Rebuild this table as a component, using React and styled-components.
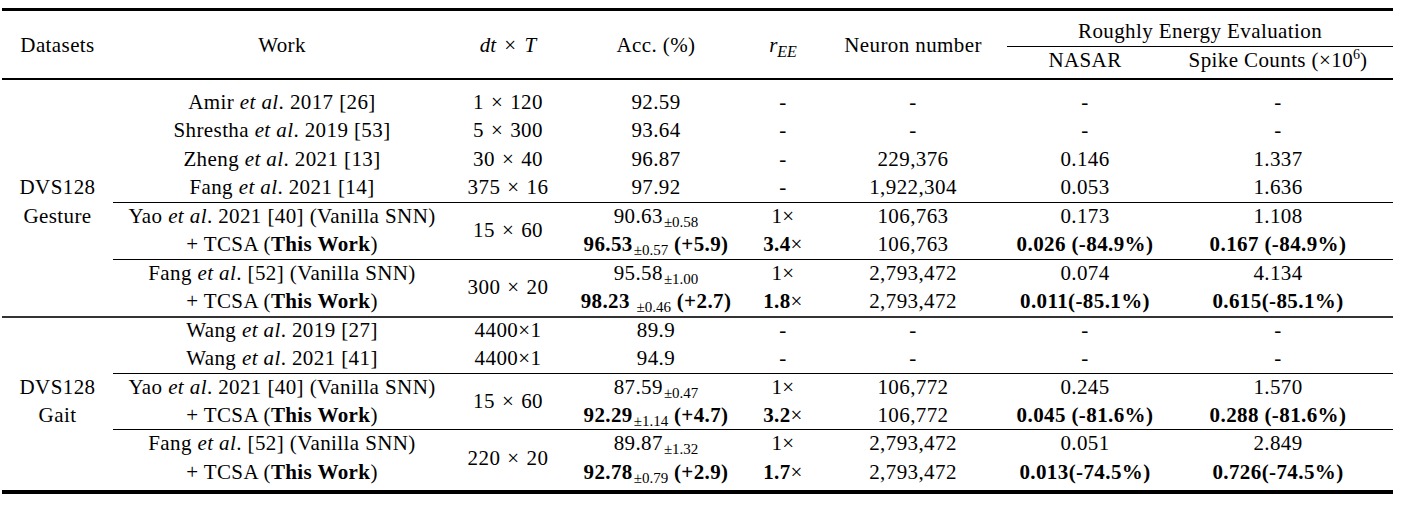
import React from 'react';
import styled, { createGlobalStyle } from 'styled-components';

const GlobalStyle = createGlobalStyle`
  html, body {
    margin: 0;
    padding: 0;
    background: #fff;
  }
  body {
    font-family: "Liberation Serif", "Times New Roman", serif;
    color: #000;
  }
`;

const Frame = styled.div`
  width: 1391px;
  margin: 8px 0 0 2px;
  border-top: 3px solid #000;
  border-bottom: 4px solid #000;
`;

const Table = styled.table`
  width: 100%;
  table-layout: fixed;
  border-collapse: separate;
  border-spacing: 0;
  font-size: 21px;
  letter-spacing: 0.4px;
`;

const Head = styled.th`
  font-weight: normal;
  text-align: center;
  vertical-align: middle;
  white-space: nowrap;
  line-height: 26px;
  padding: ${(p) => p.$pad || '0'};
  border-bottom: ${(p) => p.$rule || 0}px solid #000;
`;

const Cell = styled.td`
  padding: 0;
  height: 28.45px;
  line-height: 28.45px;
  text-align: center;
  vertical-align: middle;
  white-space: nowrap;
  box-shadow: ${(p) => (p.$rule ? `inset 0 ${p.$rule}px 0 ${p.$color || '#000'}` : 'none')};
`;

const Spacer = styled.tr`
  height: ${(p) => p.$h}px;
  td {
    padding: 0;
  }
`;

const M = styled.i`
  letter-spacing: 0;
`;

const Op = styled.span`
  display: inline-block;
  margin: 0 ${(p) => p.$gap || 5}px;
`;

const Sub = styled.sub`
  font-size: 16px;
  line-height: 0;
  vertical-align: -5px;
  letter-spacing: 0.5px;
`;

const Sup = styled.sup`
  font-size: 14px;
  line-height: 0;
  vertical-align: 8px;
  letter-spacing: 0;
`;

const Pm = styled.span`
  font-size: 15px;
  font-weight: normal;
  line-height: 0;
  vertical-align: -4px;
  letter-spacing: 0;
  margin-left: 1px;
`;

const Times = ({ a, b, tight }) => (
  <span>
    {a}
    {tight ? '×' : <Op $gap={7}>×</Op>}
    {b}
  </span>
);

const widths = [111, 338, 114, 182, 72, 188, 156, 230];

const yao = (
  <>
    Yao <i>et al</i>. 2021 [40] (Vanilla SNN)
  </>
);
const fang = (
  <>
    Fang <i>et al</i>. [52] (Vanilla SNN)
  </>
);
const tcsa = (
  <>
    + TCSA (<b>This Work</b>)
  </>
);

const groups = [
  {
    name: ['DVS128', 'Gesture'],
    rows: [
      { work: <>Amir <i>et al</i>. 2017 [26]</>, dt: <Times a="1" b="120" />, acc: '92.59', ree: '-', n: '-', nasar: '-', spike: '-' },
      { work: <>Shrestha <i>et al</i>. 2019 [53]</>, dt: <Times a="5" b="300" />, acc: '93.64', ree: '-', n: '-', nasar: '-', spike: '-' },
      { work: <>Zheng <i>et al</i>. 2021 [13]</>, dt: <Times a="30" b="40" />, acc: '96.87', ree: '-', n: '229,376', nasar: '0.146', spike: '1.337' },
      { work: <>Fang <i>et al</i>. 2021 [14]</>, dt: <Times a="375" b="16" />, acc: '97.92', ree: '-', n: '1,922,304', nasar: '0.053', spike: '1.636' },
      {
        rule: true,
        work: yao,
        dt: <Times a="15" b="60" />,
        span: 2,
        acc: <>90.63<Pm>±0.58</Pm></>,
        ree: '1×',
        n: '106,763',
        nasar: '0.173',
        spike: '1.108',
      },
      {
        work: tcsa,
        acc: <><b>96.53</b><Pm>±0.57</Pm> <b>(+5.9)</b></>,
        ree: <><b>3.4</b>×</>,
        n: '106,763',
        nasar: <b>0.026 (-84.9%)</b>,
        spike: <b>0.167 (-84.9%)</b>,
      },
      {
        rule: true,
        work: fang,
        dt: <Times a="300" b="20" />,
        span: 2,
        acc: <>95.58<Pm>±1.00</Pm></>,
        ree: '1×',
        n: '2,793,472',
        nasar: '0.074',
        spike: '4.134',
      },
      {
        work: tcsa,
        acc: <><b>98.23</b> <Pm>±0.46</Pm> <b>(+2.7)</b></>,
        ree: <><b>1.8</b>×</>,
        n: '2,793,472',
        nasar: <b>0.011(-85.1%)</b>,
        spike: <b>0.615(-85.1%)</b>,
      },
    ],
  },
  {
    name: ['DVS128', 'Gait'],
    top: true,
    rows: [
      { work: <>Wang <i>et al</i>. 2019 [27]</>, dt: <Times a="4400" b="1" tight />, acc: '89.9', ree: '-', n: '-', nasar: '-', spike: '-' },
      { work: <>Wang <i>et al</i>. 2021 [41]</>, dt: <Times a="4400" b="1" tight />, acc: '94.9', ree: '-', n: '-', nasar: '-', spike: '-' },
      {
        rule: true,
        work: yao,
        dt: <Times a="15" b="60" />,
        span: 2,
        acc: <>87.59<Pm>±0.47</Pm></>,
        ree: '1×',
        n: '106,772',
        nasar: '0.245',
        spike: '1.570',
      },
      {
        work: tcsa,
        acc: <><b>92.29</b><Pm>±1.14</Pm> <b>(+4.7)</b></>,
        ree: <><b>3.2</b>×</>,
        n: '106,772',
        nasar: <b>0.045 (-81.6%)</b>,
        spike: <b>0.288 (-81.6%)</b>,
      },
      {
        rule: true,
        work: fang,
        dt: <Times a="220" b="20" />,
        span: 2,
        acc: <>89.87<Pm>±1.32</Pm></>,
        ree: '1×',
        n: '2,793,472',
        nasar: '0.051',
        spike: '2.849',
      },
      {
        work: tcsa,
        acc: <><b>92.78</b><Pm>±0.79</Pm> <b>(+2.9)</b></>,
        ree: <><b>1.7</b>×</>,
        n: '2,793,472',
        nasar: <b>0.013(-74.5%)</b>,
        spike: <b>0.726(-74.5%)</b>,
      },
    ],
  },
];

const Group = ({ group, first, last }) => {
  const groupRule = group.top ? 2 : 0;
  return (
    <tbody>
      {first && (
        <Spacer $h={8}>
          <td colSpan={8} />
        </Spacer>
      )}
      {group.rows.map((row, i) => {
        const rule = i === 0 ? groupRule : row.rule ? 1 : 0;
        const color = i === 0 ? '#333' : '#000';
        return (
          <tr key={i}>
            {i === 0 && (
              <Cell rowSpan={group.rows.length} $rule={groupRule} $color="#333">
                {group.name[0]}
                <br />
                {group.name[1]}
              </Cell>
            )}
            <Cell $rule={rule} $color={color}>{row.work}</Cell>
            {row.dt && (
              <Cell rowSpan={row.span || 1} $rule={rule} $color={color}>
                {row.dt}
              </Cell>
            )}
            <Cell $rule={rule} $color={color}>{row.acc}</Cell>
            <Cell $rule={rule} $color={color}>{row.ree}</Cell>
            <Cell $rule={rule} $color={color}>{row.n}</Cell>
            <Cell $rule={rule} $color={color}>{row.nasar}</Cell>
            <Cell $rule={rule} $color={color}>{row.spike}</Cell>
          </tr>
        );
      })}
      {last && (
        <Spacer $h={4}>
          <td colSpan={8} />
        </Spacer>
      )}
    </tbody>
  );
};

export default function App() {
  return (
    <>
      <GlobalStyle />
      <Frame>
        <Table>
          <colgroup>
            {widths.map((w, i) => (
              <col key={i} style={{ width: w }} />
            ))}
          </colgroup>
          <thead>
            <tr>
              <Head rowSpan={2} $rule={2}>Datasets</Head>
              <Head rowSpan={2} $rule={2}>Work</Head>
              <Head rowSpan={2} $rule={2}>
                <M>dt</M>
                <Op $gap={8}>×</Op>
                <M>T</M>
              </Head>
              <Head rowSpan={2} $rule={2}>Acc. (%)</Head>
              <Head rowSpan={2} $rule={2}>
                <M>r</M>
                <Sub>
                  <M>EE</M>
                </Sub>
              </Head>
              <Head rowSpan={2} $rule={2}>Neuron number</Head>
              <Head colSpan={2} $rule={1} $pad="7px 0 2px">
                Roughly Energy Evaluation
              </Head>
            </tr>
            <tr>
              <Head $rule={2} $pad="0 0 5px">NASAR</Head>
              <Head $rule={2} $pad="0 0 5px">
                Spike Counts (×10<Sup>6</Sup>)
              </Head>
            </tr>
          </thead>
          {groups.map((g, i) => (
            <Group key={i} group={g} first={i === 0} last={i === groups.length - 1} />
          ))}
        </Table>
      </Frame>
    </>
  );
}
